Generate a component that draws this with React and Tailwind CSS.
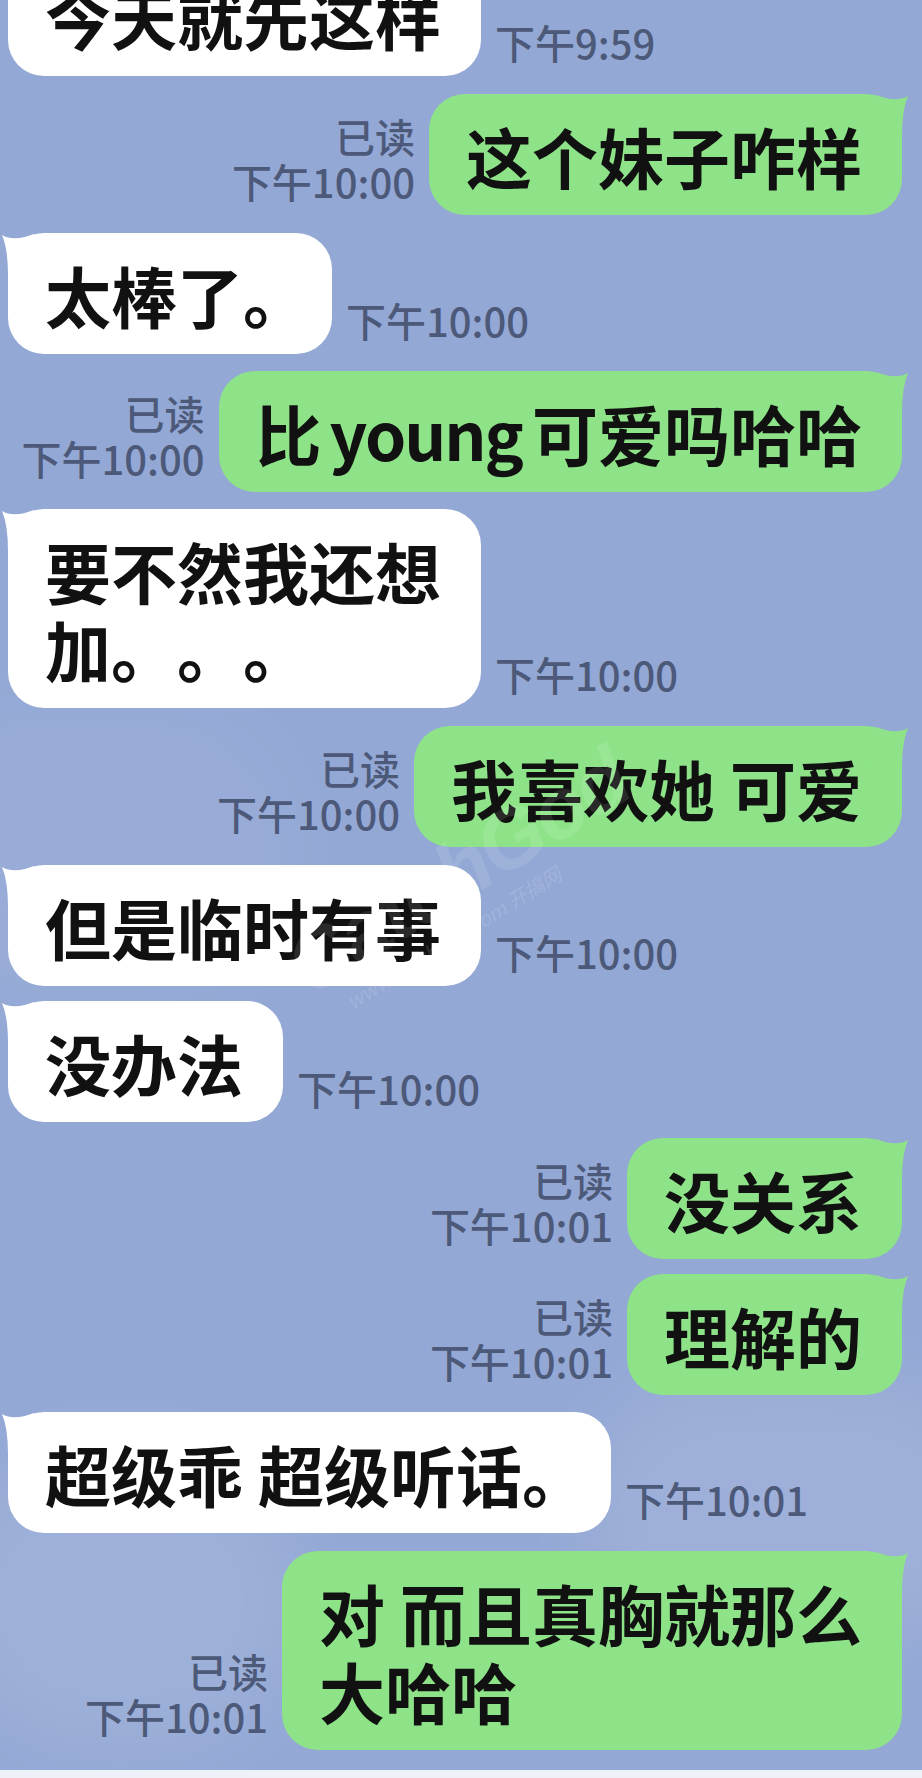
import React from 'react';

const font = { fontFamily: '"Noto Sans CJK SC", "Noto Sans", sans-serif' };

const messages = [
  { side: 'in', mt: 'mt-[-45px]', time: '下午9:59', lines: ['今天就先这样'] },
  { side: 'out', mt: 'mt-[18px]', time: '下午10:00', lines: ['这个妹子咋样'] },
  { side: 'in', mt: 'mt-[18px]', time: '下午10:00', lines: ['太棒了'], stop: true },
  { side: 'out', mt: 'mt-[17px]', time: '下午10:00', young: true },
  { side: 'in', mt: 'mt-[17px]', time: '下午10:00', lines: ['要不然我还想', '加。。。'] },
  { side: 'out', mt: 'mt-[18px]', time: '下午10:00', lines: ['我喜欢她 可爱'] },
  { side: 'in', mt: 'mt-[18px]', time: '下午10:00', lines: ['但是临时有事'] },
  { side: 'in', mt: 'mt-[15px]', time: '下午10:00', lines: ['没办法'] },
  { side: 'out', mt: 'mt-[16px]', time: '下午10:01', lines: ['没关系'] },
  { side: 'out', mt: 'mt-[15px]', time: '下午10:01', lines: ['理解的'] },
  { side: 'in', mt: 'mt-[17px]', time: '下午10:01', lines: ['超级乖 超级听话'], stop: true },
  { side: 'out', mt: 'mt-[18px]', time: '下午10:01', lines: ['对 而且真胸就那么', '大哈哈'] },
];

// little horn on the top corner of a bubble
function Tail({ color, flip }) {
  return (
    <svg
      width="44"
      height="44"
      viewBox="0 0 44 44"
      className={flip ? 'absolute top-[-2px] right-[-8px] scale-x-[-1]' : 'absolute top-[-2px] left-[-8px]'}
    >
      <path d="M2 4 Q14 11 34 3 L44 44 L8 44 Q8 18 2 4 Z" fill={color} />
    </svg>
  );
}

function BubbleText({ m }) {
  if (m.young) {
    return (
      <div className="text-[66px] leading-[78px] font-bold text-[#111] whitespace-nowrap">
        比<span className="ml-[8px] mr-[10px] font-semibold tracking-[-2px]">young</span>可爱吗哈哈
      </div>
    );
  }
  return (
    <div className="text-[66px] leading-[78px] font-bold text-[#111] whitespace-nowrap [text-spacing-trim:space-all]">
      {m.lines.map((l, i) => (
        <div key={i}>
          {l}
          {m.stop && i === m.lines.length - 1 && <span className="-mr-[17px]">。</span>}
        </div>
      ))}
    </div>
  );
}

const timeCls = 'text-[40px] leading-[45px] font-medium text-[#4d5979]';

function Incoming({ m }) {
  return (
    <div className={`flex items-end pl-[8px] ${m.mt}`}>
      <div className="relative rounded-[36px] bg-white pl-[37px] pr-[40px] pt-[22px] pb-[21px]">
        <Tail color="#ffffff" />
        <div className="relative">
          <BubbleText m={m} />
        </div>
      </div>
      <div className={`ml-[14px] mb-[11px] ${timeCls}`}>{m.time}</div>
    </div>
  );
}

function Outgoing({ m }) {
  return (
    <div className={`flex items-end justify-end pr-[20px] ${m.mt}`}>
      <div className={`mr-[14px] mb-[11px] flex flex-col items-end ${timeCls}`}>
        <span>已读</span>
        <span>{m.time}</span>
      </div>
      <div className="relative rounded-[36px] bg-[#8ee388] pl-[37px] pr-[40px] pt-[22px] pb-[21px]">
        <Tail color="#8ee388" flip />
        <div className="relative">
          <BubbleText m={m} />
        </div>
      </div>
    </div>
  );
}

export default function App() {
  return (
    <div className="w-[922px] h-[1778px] flex flex-col overflow-hidden" style={font}>
      <div className="relative h-[1770px] overflow-hidden bg-[#93a8d5]">
        {/* soft cloud texture of the chat wallpaper */}
        <div className="absolute left-[-120px] top-[700px] w-[420px] h-[300px] rounded-full bg-white/5 blur-2xl" />
        <div className="absolute right-[-80px] top-[1380px] w-[420px] h-[260px] rounded-full bg-white/10 blur-2xl" />
        <div className="absolute left-[-60px] top-[1450px] w-[360px] h-[300px] rounded-full bg-white/10 blur-2xl" />

        <div className="relative flex flex-col">
          {messages.map((m, i) =>
            m.side === 'in' ? <Incoming key={i} m={m} /> : <Outgoing key={i} m={m} />
          )}
        </div>

        {/* faint watermark */}
        <div className="absolute left-[300px] top-[930px] -rotate-[32deg] origin-left pointer-events-none">
          <div className="text-[84px] leading-none font-bold italic text-white/10 tracking-tight" style={{ fontFamily: '"Liberation Sans", sans-serif' }}>
            CatchGod
          </div>
          <div className="text-[20px] leading-none italic text-white/15 ml-[30px] mt-[2px]">
            www.catchgod.com 开搞网
          </div>
        </div>
      </div>
      <div className="h-[8px] bg-[#eef1f7]" />
    </div>
  );
}
